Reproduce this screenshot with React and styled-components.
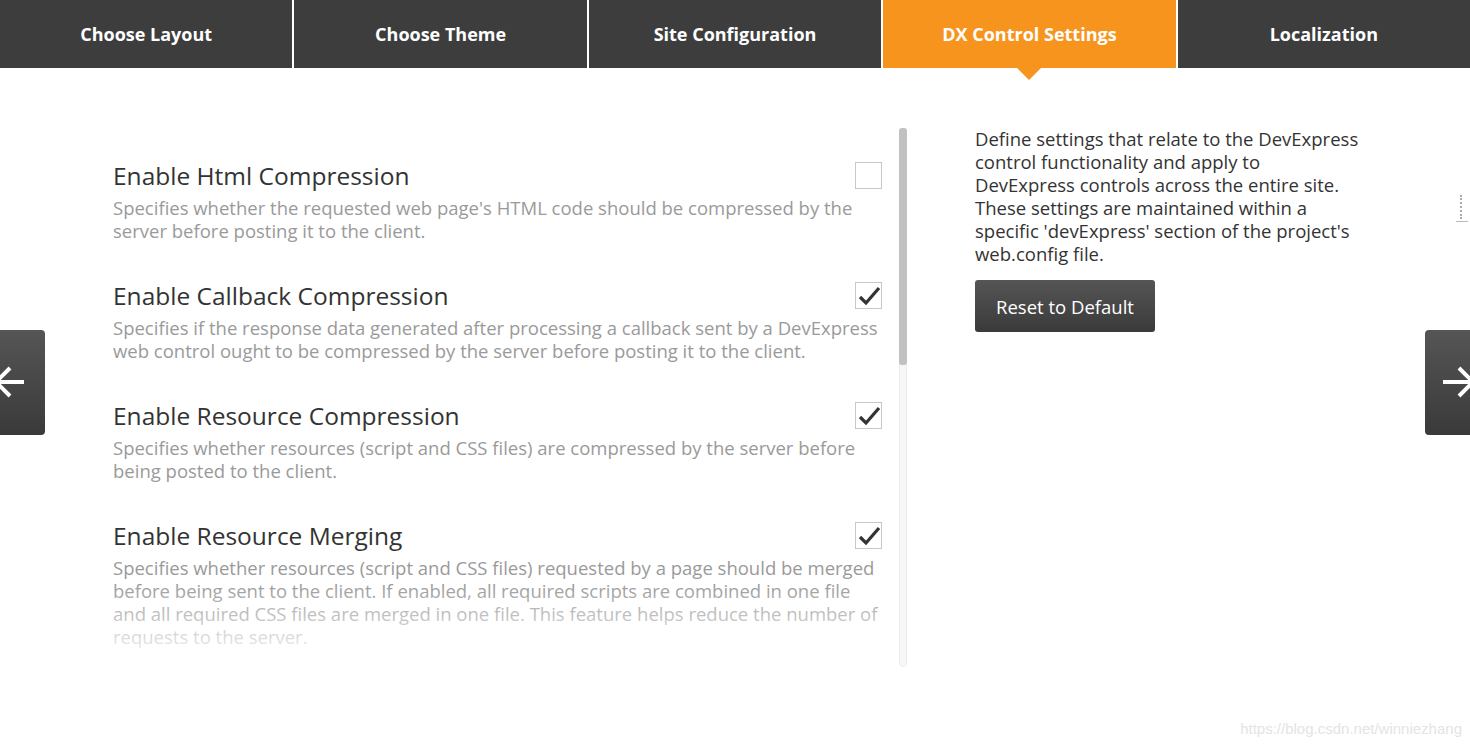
import React from 'react';
import styled, { createGlobalStyle } from 'styled-components';

const GlobalStyle = createGlobalStyle`
  html, body {
    margin: 0;
    padding: 0;
    background: #fff;
  }
  body {
    font-family: 'Open Sans', 'Noto Sans', sans-serif;
    overflow: hidden;
  }
`;

const Page = styled.div`
  position: relative;
  width: 1470px;
  height: 745px;
  overflow: hidden;
`;

const TabBar = styled.div`
  display: flex;
  gap: 2px;
  height: 68px;
  background: #fff;
`;

const Tab = styled.div`
  position: relative;
  flex: 1;
  display: flex;
  align-items: center;
  justify-content: center;
  background: ${({ active }) => (active ? '#f7941e' : '#3d3d3d')};
  color: #fff;
  font-weight: 700;
  font-size: 18px;

  &::after {
    content: '';
    display: ${({ active }) => (active ? 'block' : 'none')};
    position: absolute;
    left: 50%;
    bottom: -12px;
    margin-left: -12px;
    border-left: 12px solid transparent;
    border-right: 12px solid transparent;
    border-top: 12px solid #f7941e;
  }
`;

const Body = styled.div`
  display: flex;
  padding-top: 60px;
`;

const ListColumn = styled.div`
  position: relative;
  width: 907px;
  height: 539px;
  flex-shrink: 0;
  overflow: hidden;
`;

const SettingsList = styled.div`
  display: flex;
  flex-direction: column;
  gap: 36px;
  padding: 30px 0 0 113px;
  width: 770px;
`;

const Fade = styled.div`
  position: absolute;
  left: 0;
  right: 20px;
  bottom: 0;
  height: 84px;
  background: linear-gradient(to bottom, rgba(255, 255, 255, 0), #fff);
  pointer-events: none;
`;

const Setting = styled.div`
  display: flex;
  flex-direction: column;
`;

const SettingHead = styled.div`
  display: flex;
  align-items: center;
  justify-content: space-between;
  height: 34px;
`;

const SettingTitle = styled.div`
  font-size: 24.5px;
  color: #333;
`;

const CheckBox = styled.div`
  width: 25px;
  height: 25px;
  border: 1px solid #c8c8c8;
  display: flex;
  align-items: center;
  justify-content: center;
  margin-right: 1px;
  margin-top: 1px;
`;

const SettingText = styled.div`
  font-size: 18.5px;
  line-height: 23px;
  color: #9a9a9a;
  margin-top: 4px;
`;

const ScrollTrack = styled.div`
  position: absolute;
  top: 0;
  left: 899px;
  width: 6px;
  height: 537px;
  border: 1px solid #ececec;
  border-radius: 4px;
  background: #f7f7f7;
`;

const ScrollThumb = styled.div`
  height: 237px;
  background: #c1c1c1;
  border-radius: 3px;
  margin: -1px;
`;

const InfoColumn = styled.div`
  display: flex;
  flex-direction: column;
  align-items: flex-start;
  gap: 15px;
  padding-left: 68px;
  width: 388px;
`;

const InfoText = styled.p`
  margin: -1px 0 0;
  font-size: 18.5px;
  line-height: 23px;
  color: #333;
`;

const ResetButton = styled.button`
  width: 180px;
  height: 52px;
  border: none;
  border-radius: 3px;
  background: linear-gradient(to bottom, #555, #3a3a3a);
  color: #fff;
  font-family: inherit;
  font-size: 18.5px;
`;

const SideArrow = styled.div`
  position: absolute;
  top: 330px;
  ${({ side }) => (side === 'left' ? 'left: 0;' : 'right: 0;')}
  width: 45px;
  height: 105px;
  border-radius: ${({ side }) => (side === 'left' ? '0 4px 4px 0' : '4px 0 0 4px')};
  background: linear-gradient(to bottom, #555, #3a3a3a);
  overflow: hidden;
`;

const DotRule = styled.div`
  position: absolute;
  top: 195px;
  left: 1460px;
  width: 1px;
  height: 24px;
  border-left: 2px dotted #aaa;

  &::after {
    content: '';
    position: absolute;
    left: -6px;
    bottom: -3px;
    width: 12px;
    border-top: 1px solid #bbb;
  }
`;

const Watermark = styled.div`
  position: absolute;
  right: 8px;
  bottom: 8px;
  font-family: 'Liberation Sans', Arial, sans-serif;
  font-size: 15px;
  color: #e4e4e4;
`;

const Check = () => (
  <svg width='24' height='22' viewBox='0 0 24 22'>
    <path d='M3 12 L9 18 L22 3' fill='none' stroke='#333' strokeWidth='3.2' />
  </svg>
);

const settings = [
  {
    title: 'Enable Html Compression',
    checked: false,
    text: "Specifies whether the requested web page's HTML code should be compressed by the server before posting it to the client.",
  },
  {
    title: 'Enable Callback Compression',
    checked: true,
    text: 'Specifies if the response data generated after processing a callback sent by a DevExpress web control ought to be compressed by the server before posting it to the client.',
  },
  {
    title: 'Enable Resource Compression',
    checked: true,
    text: 'Specifies whether resources (script and CSS files) are compressed by the server before being posted to the client.',
  },
  {
    title: 'Enable Resource Merging',
    checked: true,
    text: 'Specifies whether resources (script and CSS files) requested by a page should be merged before being sent to the client. If enabled, all required scripts are combined in one file and all required CSS files are merged in one file. This feature helps reduce the number of requests to the server.',
  },
];

const tabs = [
  'Choose Layout',
  'Choose Theme',
  'Site Configuration',
  'DX Control Settings',
  'Localization',
];

export default function App() {
  return (
    <Page>
      <GlobalStyle />
      <TabBar>
        {tabs.map((t) => (
          <Tab key={t} active={t === 'DX Control Settings'}>
            {t}
          </Tab>
        ))}
      </TabBar>
      <Body>
        <ListColumn>
          <SettingsList>
            {settings.map((s) => (
              <Setting key={s.title}>
                <SettingHead>
                  <SettingTitle>{s.title}</SettingTitle>
                  <CheckBox>{s.checked && <Check />}</CheckBox>
                </SettingHead>
                <SettingText>{s.text}</SettingText>
              </Setting>
            ))}
          </SettingsList>
          <Fade />
          <ScrollTrack>
            <ScrollThumb />
          </ScrollTrack>
        </ListColumn>
        <InfoColumn>
          <InfoText>
            Define settings that relate to the DevExpress control functionality
            and apply to DevExpress controls across the entire site. These
            settings are maintained within a specific 'devExpress' section of
            the project's web.config file.
          </InfoText>
          <ResetButton>Reset to Default</ResetButton>
        </InfoColumn>
      </Body>
      <SideArrow side='left'>
        <svg width='45' height='105' viewBox='0 0 45 105'>
          <path d='M-4 52 H24 M10 38 L-4 52 L10 66' stroke='#fff' strokeWidth='4' fill='none' />
        </svg>
      </SideArrow>
      <SideArrow side='right'>
        <svg width='45' height='105' viewBox='0 0 45 105'>
          <path d='M18 52 H50 M34 38 L48 52 L34 66' stroke='#fff' strokeWidth='4' fill='none' />
        </svg>
      </SideArrow>
      <DotRule />
      <Watermark>https://blog.csdn.net/winniezhang</Watermark>
    </Page>
  );
}
